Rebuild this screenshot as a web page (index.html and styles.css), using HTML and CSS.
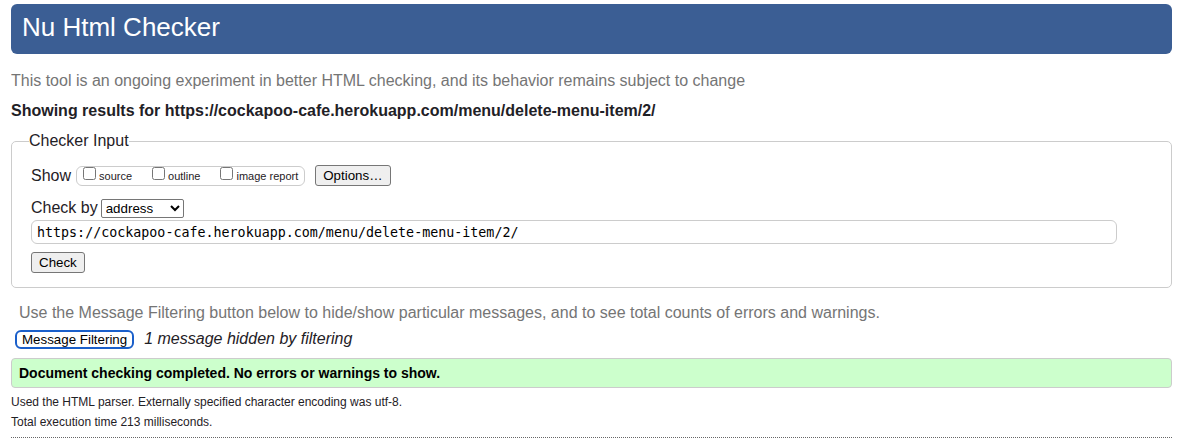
FILE: index.html
```
<!DOCTYPE html>
<html lang="en">
<head>
<meta charset="utf-8">
<title>Nu Html Checker</title>
<link rel="stylesheet" href="styles.css">
</head>
<body>
<header class="banner"><h1 class="banner-title">Nu Html Checker</h1></header>
<main>
<p class="intro">This tool is an ongoing experiment in better HTML checking, and its behavior remains subject to change</p>
<h2 class="results-title">Showing results for https://cockapoo-cafe.herokuapp.com/menu/delete-menu-item/2/</h2>
<form>
<fieldset class="checker">
<legend class="checker-legend">Checker Input</legend>
<div class="show-row">
<span>Show</span>
<div class="show-options">
<label class="check"><input class="check-box" type="checkbox"><span>source</span></label>
<label class="check"><input class="check-box" type="checkbox"><span>outline</span></label>
<label class="check"><input class="check-box" type="checkbox"><span>image report</span></label>
</div>
<button class="button options-button" type="button">Options…</button>
</div>
<div class="method-row">
<label for="method">Check by</label>
<select class="method" id="method"><option>address</option><option>file upload</option><option>text input</option></select>
</div>
<input class="address" type="text" aria-label="Address" value="https://cockapoo-cafe.herokuapp.com/menu/delete-menu-item/2/">
<button class="button check-button" type="button">Check</button>
</fieldset>
</form>
<section>
<p class="filter-help">Use the Message Filtering button below to hide/show particular messages, and to see total counts of errors and warnings.</p>
<div class="filter-row">
<button class="filter-button" type="button">Message Filtering</button>
<em>1 message hidden by filtering</em>
</div>
<p class="success">Document checking completed. No errors or warnings to show.</p>
<p class="detail">Used the HTML parser. Externally specified character encoding was utf-8.</p>
<p class="detail">Total execution time 213 milliseconds.</p>
</section>
</main>
<hr class="divider">
</body>
</html>
```
FILE: styles.css
```
* {
  box-sizing: border-box;
}

body {
  margin: 4px 6px 0 11px;
  background: #fff;
  color: #1f2126;
  font-family: "Liberation Sans", Arial, sans-serif;
  font-size: 16px;
  line-height: 20px;
}

.banner {
  padding: 8px 11px 12px;
  border-radius: 6px;
  background: #3b5e94;
}

.banner-title {
  margin: 0;
  color: #fff;
  font-size: 26px;
  font-weight: 400;
  line-height: 30px;
}

.intro {
  margin: 17px 0 10px;
  color: #757575;
}

.results-title {
  margin: 0 0 10px;
  font-size: 16px;
}

.checker {
  margin: 0;
  padding: 14px 54px 14px 19px;
  border: 1px solid #ccc;
  border-radius: 5px;
}

.checker-legend {
  margin-left: -2px;
  padding: 0;
}

.show-row {
  display: flex;
  align-items: center;
}

.show-options {
  display: flex;
  gap: 20px;
  margin: 0 10px 0 5px;
  padding: 0 6px;
  border: 1px solid #ccc;
  border-radius: 6px;
  font-size: 11px;
  line-height: 18px;
}

.check {
  display: flex;
  gap: 3px;
}

.check-box {
  width: 13px;
  height: 13px;
  margin: 0;
}

.button {
  height: 21px;
  padding: 0 7px;
  border: 1px solid #767676;
  border-radius: 3px;
  background: #efefef;
  color: #000;
  font-family: inherit;
}

.method-row {
  display: flex;
  align-items: center;
  gap: 3px;
  margin: 12px 0 2px;
}

.method {
  width: 83px;
  height: 19px;
  padding: 0;
  border: 1px solid #767676;
  border-radius: 2px;
  background: #fff;
  color: #000;
  font-family: inherit;
}

.address {
  display: block;
  width: 100%;
  height: 24px;
  margin: 0 0 8px;
  padding: 0 5px;
  border: 1px solid #ccc;
  border-radius: 6px;
  color: #000;
  font-family: "DejaVu Sans Mono", monospace;
}

.check-button {
  display: block;
}

.filter-help {
  margin: 15px 8px 6px;
  color: #757575;
}

.filter-row {
  display: flex;
  align-items: center;
  gap: 10px;
  margin: 0 4px 9px;
}

.filter-button {
  height: 19px;
  padding: 0 5px;
  border: 2px solid #1a5fca;
  border-radius: 6px;
  background: #fff;
  color: #000;
  font-family: inherit;
}

.success {
  margin: 0 0 4px;
  padding: 4px 7px;
  border: 1px solid #ccc;
  border-radius: 4px;
  background: #cfc;
  color: #000;
  font-size: 14px;
  font-weight: 700;
}

.detail {
  margin: 0;
  font-size: 12px;
}

.divider {
  margin: 5px 0 0;
  border: 0;
  border-top: 1px dotted #666;
}
```
